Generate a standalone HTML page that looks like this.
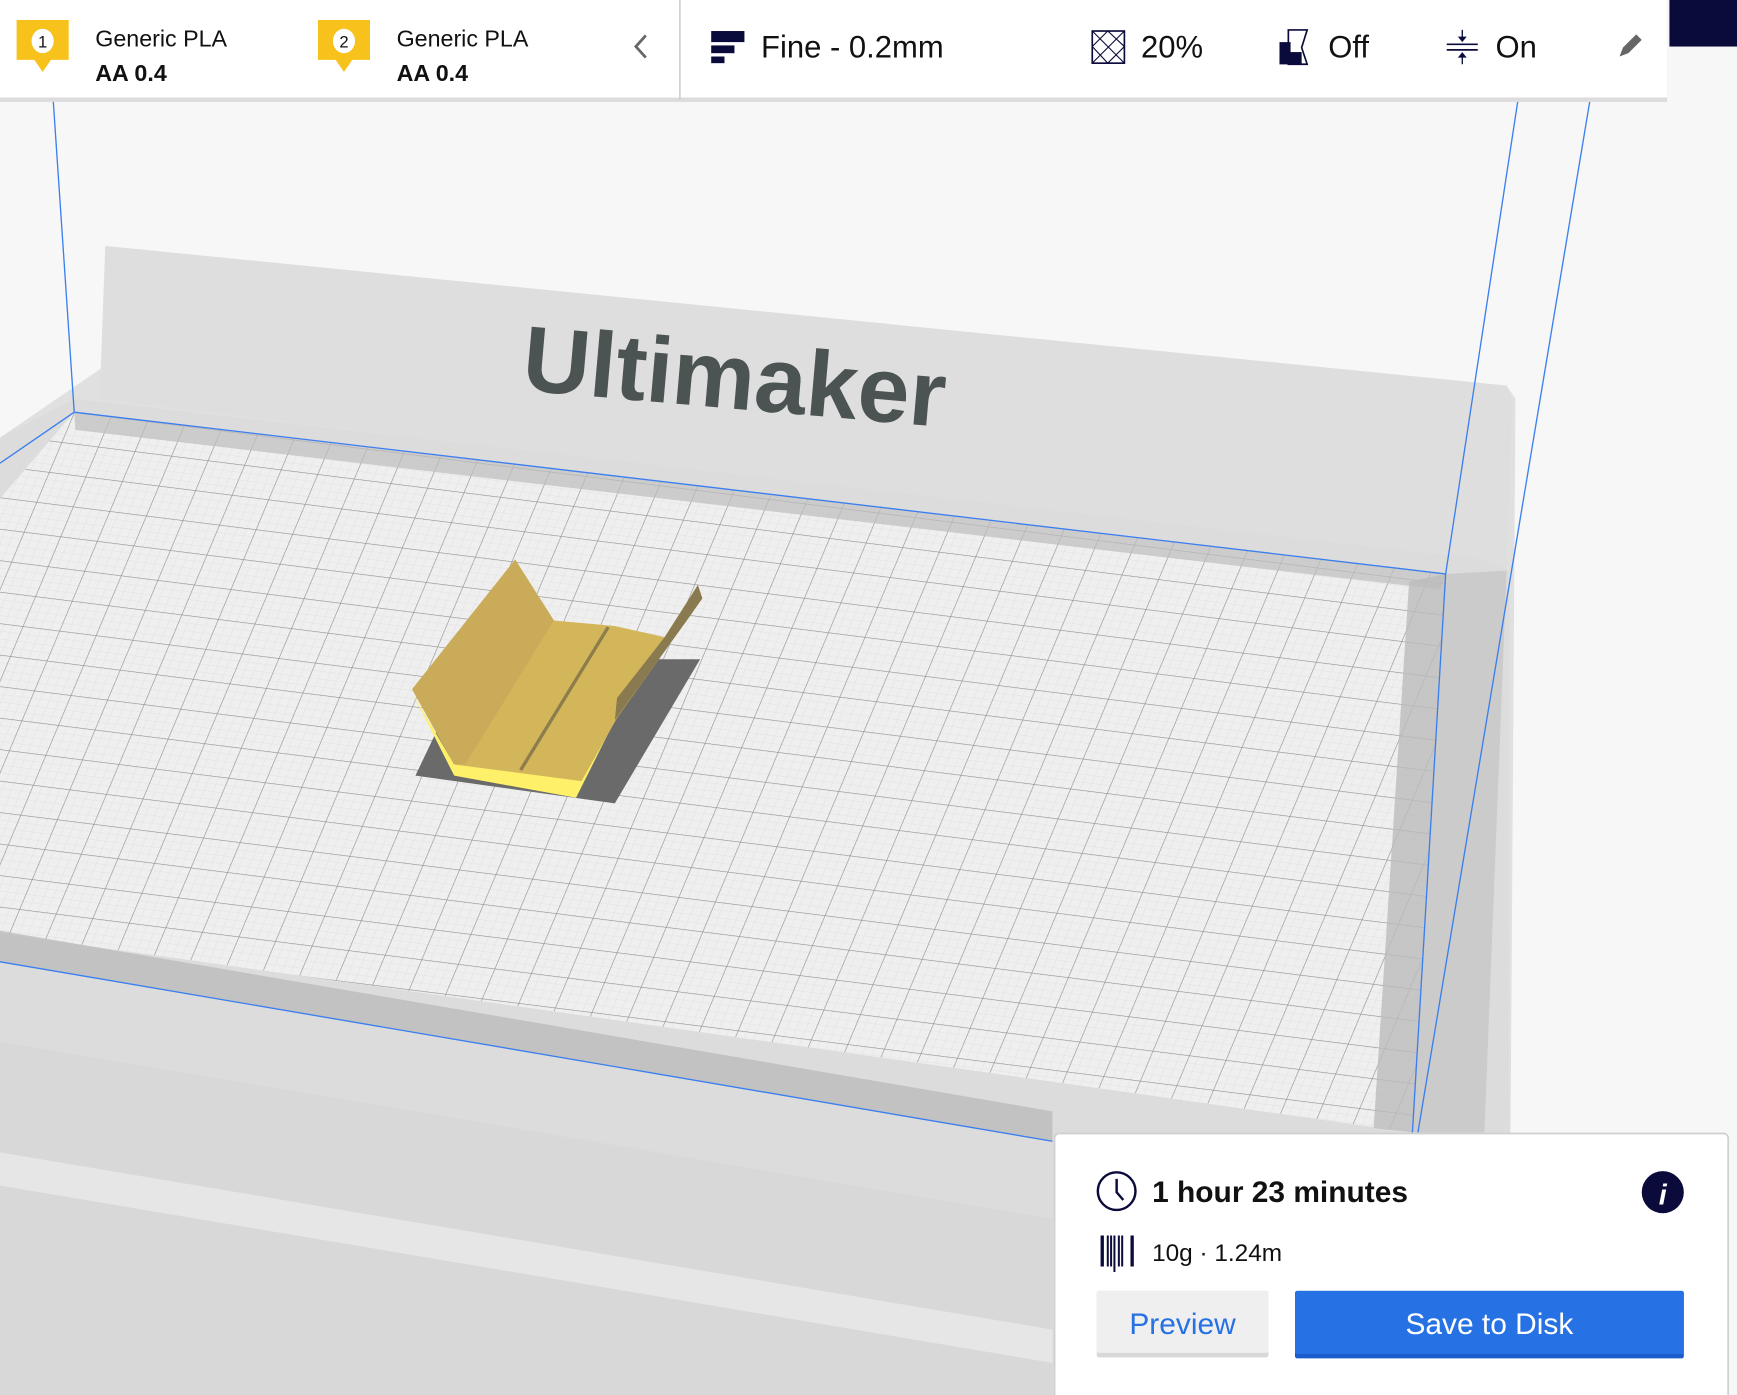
<!DOCTYPE html>
<html><head><meta charset="utf-8"><style>
html,body{margin:0;padding:0;width:1737px;height:1395px;overflow:hidden;background:#f7f7f7}
svg{display:block}
text{font-family:"Liberation Sans","DejaVu Sans",sans-serif}
</style></head><body>
<svg width="1737" height="1395" viewBox="0 0 1568 1259" preserveAspectRatio="none">
<defs>
<pattern id="g" width="33" height="27" patternUnits="userSpaceOnUse" patternTransform="matrix(1,0.125,-0.42,1,67,372)">
<rect width="33" height="27" fill="#efefef"/>
<path d="M0 6.75H33M0 13.5H33M0 20.25H33M8.25 0V27M16.5 0V27M24.75 0V27" stroke="#e2e2e2" stroke-width="0.5" fill="none"/>
<path d="M0 0H33M0 0V27" stroke="#8e8e8e" stroke-width="1.1" fill="none"/>
</pattern>
<clipPath id="bed"><polygon points="67,372 1305,518 1275,1022 -300,800"/></clipPath>
</defs>
<rect width="1568" height="1259" fill="#f7f7f7"/>
<!-- printer body -->
<polygon points="95,222 1360,348 1368,360 1362,1259 0,1259 0,395 95,330" fill="#e0e0e0"/>
<polygon points="95,222 1360,348 1365,360 1360,515 90,360" fill="#dedede"/>
<polygon points="0,395 67,360 1340,505 1362,515 1362,1259 0,1259" fill="#dcdcdc"/>
<polygon points="0,940 950,1100 950,1259 0,1259" fill="#d8d8d8"/>
<polygon points="0,1040 950,1200 950,1230 0,1070" fill="#e6e6e6"/>
<polygon points="1305,518 1360,515 1340,1022 1275,1022" fill="#cbcbcb"/>
<text x="470" y="352" font-size="84" font-weight="bold" fill="#4c5353" transform="rotate(5 470 352)" font-family="DejaVu Sans,sans-serif">Ultimaker</text>
<!-- bed -->
<polygon points="67,372 1305,518 1275,1022 -300,800" fill="#efefef"/>
<rect x="-400" y="300" width="1800" height="800" fill="url(#g)" clip-path="url(#bed)"/>
<polygon points="67,372 1305,518 1300,532 68,388" fill="#bdbdbd" opacity="0.7"/>
<polygon points="1305,518 1275,1022 1240,1018 1272,525" fill="#bbbbbb" opacity="0.8"/>
<polygon points="0,840 950,1003 950,1030 0,868" fill="#bbbbbb" opacity="0.8"/>
<path d="M67,372 L1305,518 L1275,1022 M0,868 L950,1030" stroke="#3a7ef0" stroke-width="1.2" fill="none"/>
<path d="M48,90 L67,372 M1370,92 L1305,518 M1435,92 L1280,1022 M67,372 L0,418" stroke="#3a7ef0" stroke-width="1.2" fill="none"/>
<!-- model -->
<polygon points="375,700 425,595 632,595 555,725" fill="#6a6a6a"/>
<polygon points="372,625 410,700 520,720 555,650 557,620 520,690 410,690" fill="#fff06a"/>
<polygon points="372,622 465,505 500,560 555,565 600,575 630,528 634,540 557,648 525,705 410,690" fill="#d4b65a"/>
<polygon points="372,622 465,505 500,560 420,690 410,690" fill="#c9ab5a"/>
<polygon points="600,575 630,528 634,540 620,560 555,650 557,630" fill="#8a7a50"/>
<path d="M549,566 L470,695" stroke="#8d7c4c" stroke-width="3"/>
<!-- top bar -->
<rect x="0" y="0" width="1505" height="92" fill="#dcdcdc"/>
<rect x="0" y="0" width="1505" height="88" fill="#fff"/>
<rect x="613" y="0" width="1.5" height="90" fill="#cfcfcf"/>
<rect x="1507" y="0" width="61" height="42" fill="#0b0b3b"/>
<g>
<path d="M15,18h47v36h-16l-7.5,11l-7.5-11h-16z" fill="#f7c21b"/>
<ellipse cx="38.5" cy="37" rx="10" ry="11" fill="#fff"/>
<text x="38.5" y="43" font-size="15" text-anchor="middle" fill="#111">1</text>
<text x="86" y="42" font-size="21" fill="#111">Generic PLA</text>
<text x="86" y="73" font-size="21" font-weight="bold" fill="#111">AA 0.4</text>
</g>
<g transform="translate(272,0)">
<path d="M15,18h47v36h-16l-7.5,11l-7.5-11h-16z" fill="#f7c21b"/>
<ellipse cx="38.5" cy="37" rx="10" ry="11" fill="#fff"/>
<text x="38.5" y="43" font-size="15" text-anchor="middle" fill="#111">2</text>
<text x="86" y="42" font-size="21" fill="#111">Generic PLA</text>
<text x="86" y="73" font-size="21" font-weight="bold" fill="#111">AA 0.4</text>
</g>
<path d="M583,32 L574,42 L583,52" stroke="#666" stroke-width="2.5" fill="none"/>
<rect x="642" y="28" width="30" height="10" fill="#0b0b3b"/>
<rect x="642" y="41" width="21" height="7" fill="#0b0b3b"/>
<rect x="642" y="51" width="12" height="6" fill="#0b0b3b"/>
<text x="687" y="52" font-size="28" fill="#111">Fine - 0.2mm</text>
<rect x="986" y="28" width="29" height="29" fill="none" stroke="#0b0b3b" stroke-width="1.5"/>
<path d="M986,28 L1015,57 M1015,28 L986,57 M986,42 L1000,28 L1015,42 L1000,57 Z" stroke="#0b0b3b" stroke-width="1" fill="none"/>
<text x="1030" y="52" font-size="28" fill="#111">20%</text>
<path d="M1163,27 h17 l-5,16 l5,15 h-17z" fill="none" stroke="#0b0b3b" stroke-width="1.5"/>
<rect x="1155" y="38" width="10" height="20" fill="#0b0b3b"/>
<rect x="1155" y="47" width="20" height="11" fill="#0b0b3b"/>
<text x="1199" y="52" font-size="28" fill="#111">Off</text>
<path d="M1306,40 h28 M1306,45 h28" stroke="#0b0b3b" stroke-width="1.5"/>
<path d="M1320,27 v10 M1320,48 v10" stroke="#0b0b3b" stroke-width="1.2"/>
<path d="M1316,33 l4,5 l4,-5z M1316,52 l4,-5 l4,5z" fill="#0b0b3b"/>
<text x="1350" y="52" font-size="28" fill="#111">On</text>
<path d="M1462,51 l3,-8 l12,-12 l5,5 l-12,12z" fill="#666"/>
<!-- panel -->
<rect x="952" y="1023" width="608" height="245" rx="4" fill="#fff" stroke="#cfcfcf" stroke-width="1.5"/>
<circle cx="1008" cy="1075" r="17" fill="none" stroke="#0b0b3b" stroke-width="2.2"/>
<path d="M1008,1064 v12 l6,7" stroke="#0b0b3b" stroke-width="2.2" fill="none"/>
<text x="1040" y="1085" font-size="27" font-weight="bold" fill="#111">1 hour 23 minutes</text>
<circle cx="1501" cy="1076" r="19" fill="#0b0b3b"/>
<text x="1501" y="1087" font-size="26" font-weight="bold" font-style="italic" fill="#fff" text-anchor="middle" font-family="Liberation Serif,serif">i</text>
<path d="M995,1115v28M1000,1115v28M1003,1115v28M1006,1115v33M1010,1115v28M1013,1115v28M1022,1115v28" stroke="#0b0b3b" stroke-width="1.8"/>
<path d="M995,1115v28M1022,1115v28" stroke="#0b0b3b" stroke-width="3"/>
<text x="1040" y="1138" font-size="22" fill="#111">10g · 1.24m</text>
<rect x="990" y="1165" width="155" height="60" rx="2" fill="#d8d8d8"/>
<rect x="990" y="1165" width="155" height="56" rx="2" fill="#efefef"/>
<text x="1067.5" y="1204" font-size="27" fill="#2671e3" text-anchor="middle">Preview</text>
<rect x="1169" y="1165" width="351" height="61" rx="2" fill="#1a5ccc"/>
<rect x="1169" y="1165" width="351" height="57" rx="2" fill="#2671e3"/>
<text x="1344.5" y="1204" font-size="27" fill="#fff" text-anchor="middle">Save to Disk</text>
</svg>
</body></html>
